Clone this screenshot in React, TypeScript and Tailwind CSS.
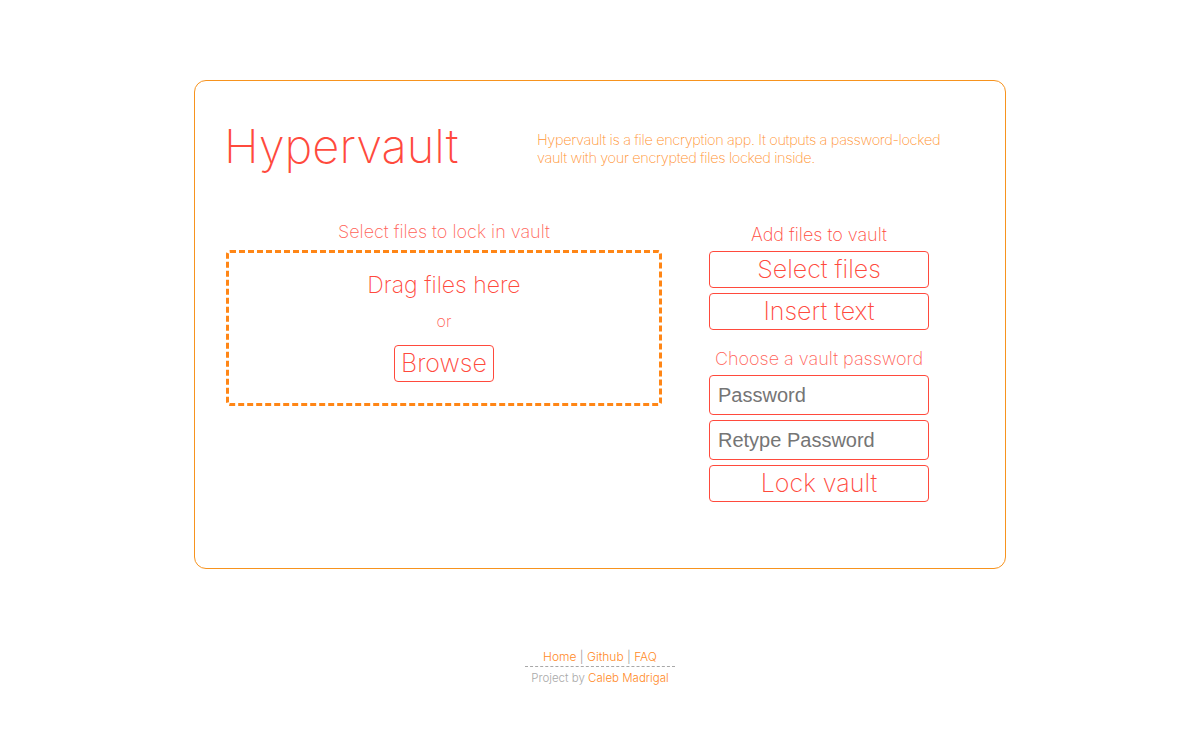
import React from 'react';

const thin = { fontFamily: 'Inter, "Noto Sans", sans-serif' };

function OutlineButton({ label }: { label: string }) {
  return (
    <button
      className="w-full h-[37px] border border-[#ff4a3d] rounded-[4px] text-[#ff4a3d] text-[25px] font-extralight leading-none flex items-center justify-center"
      style={thin}
    >
      {label}
    </button>
  );
}

function PasswordField({ placeholder }: { placeholder: string }) {
  return (
    <input
      type="password"
      placeholder={placeholder}
      className="w-full h-[40px] border border-[#ff4a3d] rounded-[4px] px-[8px] text-[20px] font-medium text-[#6f6f6f] placeholder:text-[#757575] outline-none"
      style={{ fontFamily: '"Liberation Sans", Arial, sans-serif' }}
    />
  );
}

export default function App() {
  return (
    <div className="min-h-screen bg-white pt-[80px]" style={thin}>
      <div className="w-[812px] h-[489px] mx-auto border border-[#f7931e] rounded-[12px] pt-[41px] pl-[29px]">
        <div className="flex items-start">
          <h1 className="w-[313px] text-[47px] leading-none font-extralight text-[#ff4a3d]">Hypervault</h1>
          <p className="w-[430px] mt-[9px] text-[14.5px] leading-[18px] tracking-[-0.35px] font-extralight text-[#ff9433]">
            Hypervault is a file encryption app. It outputs a password-locked vault with your encrypted files locked
            inside.
          </p>
        </div>

        <div className="flex mt-[51px]">
          <div className="w-[436px] ml-[2px] flex flex-col items-center">
            <div className="text-[18px] leading-[24px] font-extralight text-[#ff6257]">
              Select files to lock in vault
            </div>
            <div className="mt-[6px] w-full h-[156px] border-[3px] border-dashed border-[#ff8616] rounded-[4px] flex flex-col items-center pt-[17px]">
              <div className="text-[23px] leading-[30px] font-extralight text-[#ff4a3d]">Drag files here</div>
              <div className="mt-[11px] text-[16px] leading-[20px] font-extralight text-[#ff6257]">or</div>
              <button className="mt-[14px] h-[37px] px-[6px] border border-[#ff4a3d] rounded-[4px] text-[25px] leading-none font-extralight text-[#ff4a3d]">
                Browse
              </button>
            </div>
          </div>

          <div className="w-[220px] ml-[47px] flex flex-col items-center">
            <div className="text-[18px] leading-[24px] mt-[3px] font-extralight text-[#ff4a3d]">Add files to vault</div>
            <div className="w-full mt-[4px] flex flex-col gap-[5px]">
              <OutlineButton label="Select files" />
              <OutlineButton label="Insert text" />
            </div>
            <div className="mt-[17px] text-[18px] leading-[24px] font-extralight text-[#ff6257]">
              Choose a vault password
            </div>
            <div className="w-full mt-[4px] flex flex-col gap-[5px]">
              <PasswordField placeholder="Password" />
              <PasswordField placeholder="Retype Password" />
              <OutlineButton label="Lock vault" />
            </div>
          </div>
        </div>
      </div>

      <footer className="mt-[80px] flex flex-col items-center text-[12px] font-light">
        <div className="w-[150px] text-center leading-[16px] pb-[1px] border-b border-dashed border-[#a8a8a8] text-[#ff8a1f]">
          <a href="#">Home</a>
          <span className="text-[#999]"> | </span>
          <a href="#">Github</a>
          <span className="text-[#999]"> | </span>
          <a href="#">FAQ</a>
        </div>
        <div className="mt-[2px] text-[11.5px] leading-[18px] text-[#a9a9a9]">
          Project by <a href="#" className="text-[#ff8a1f]">Caleb Madrigal</a>
        </div>
      </footer>
    </div>
  );
}
